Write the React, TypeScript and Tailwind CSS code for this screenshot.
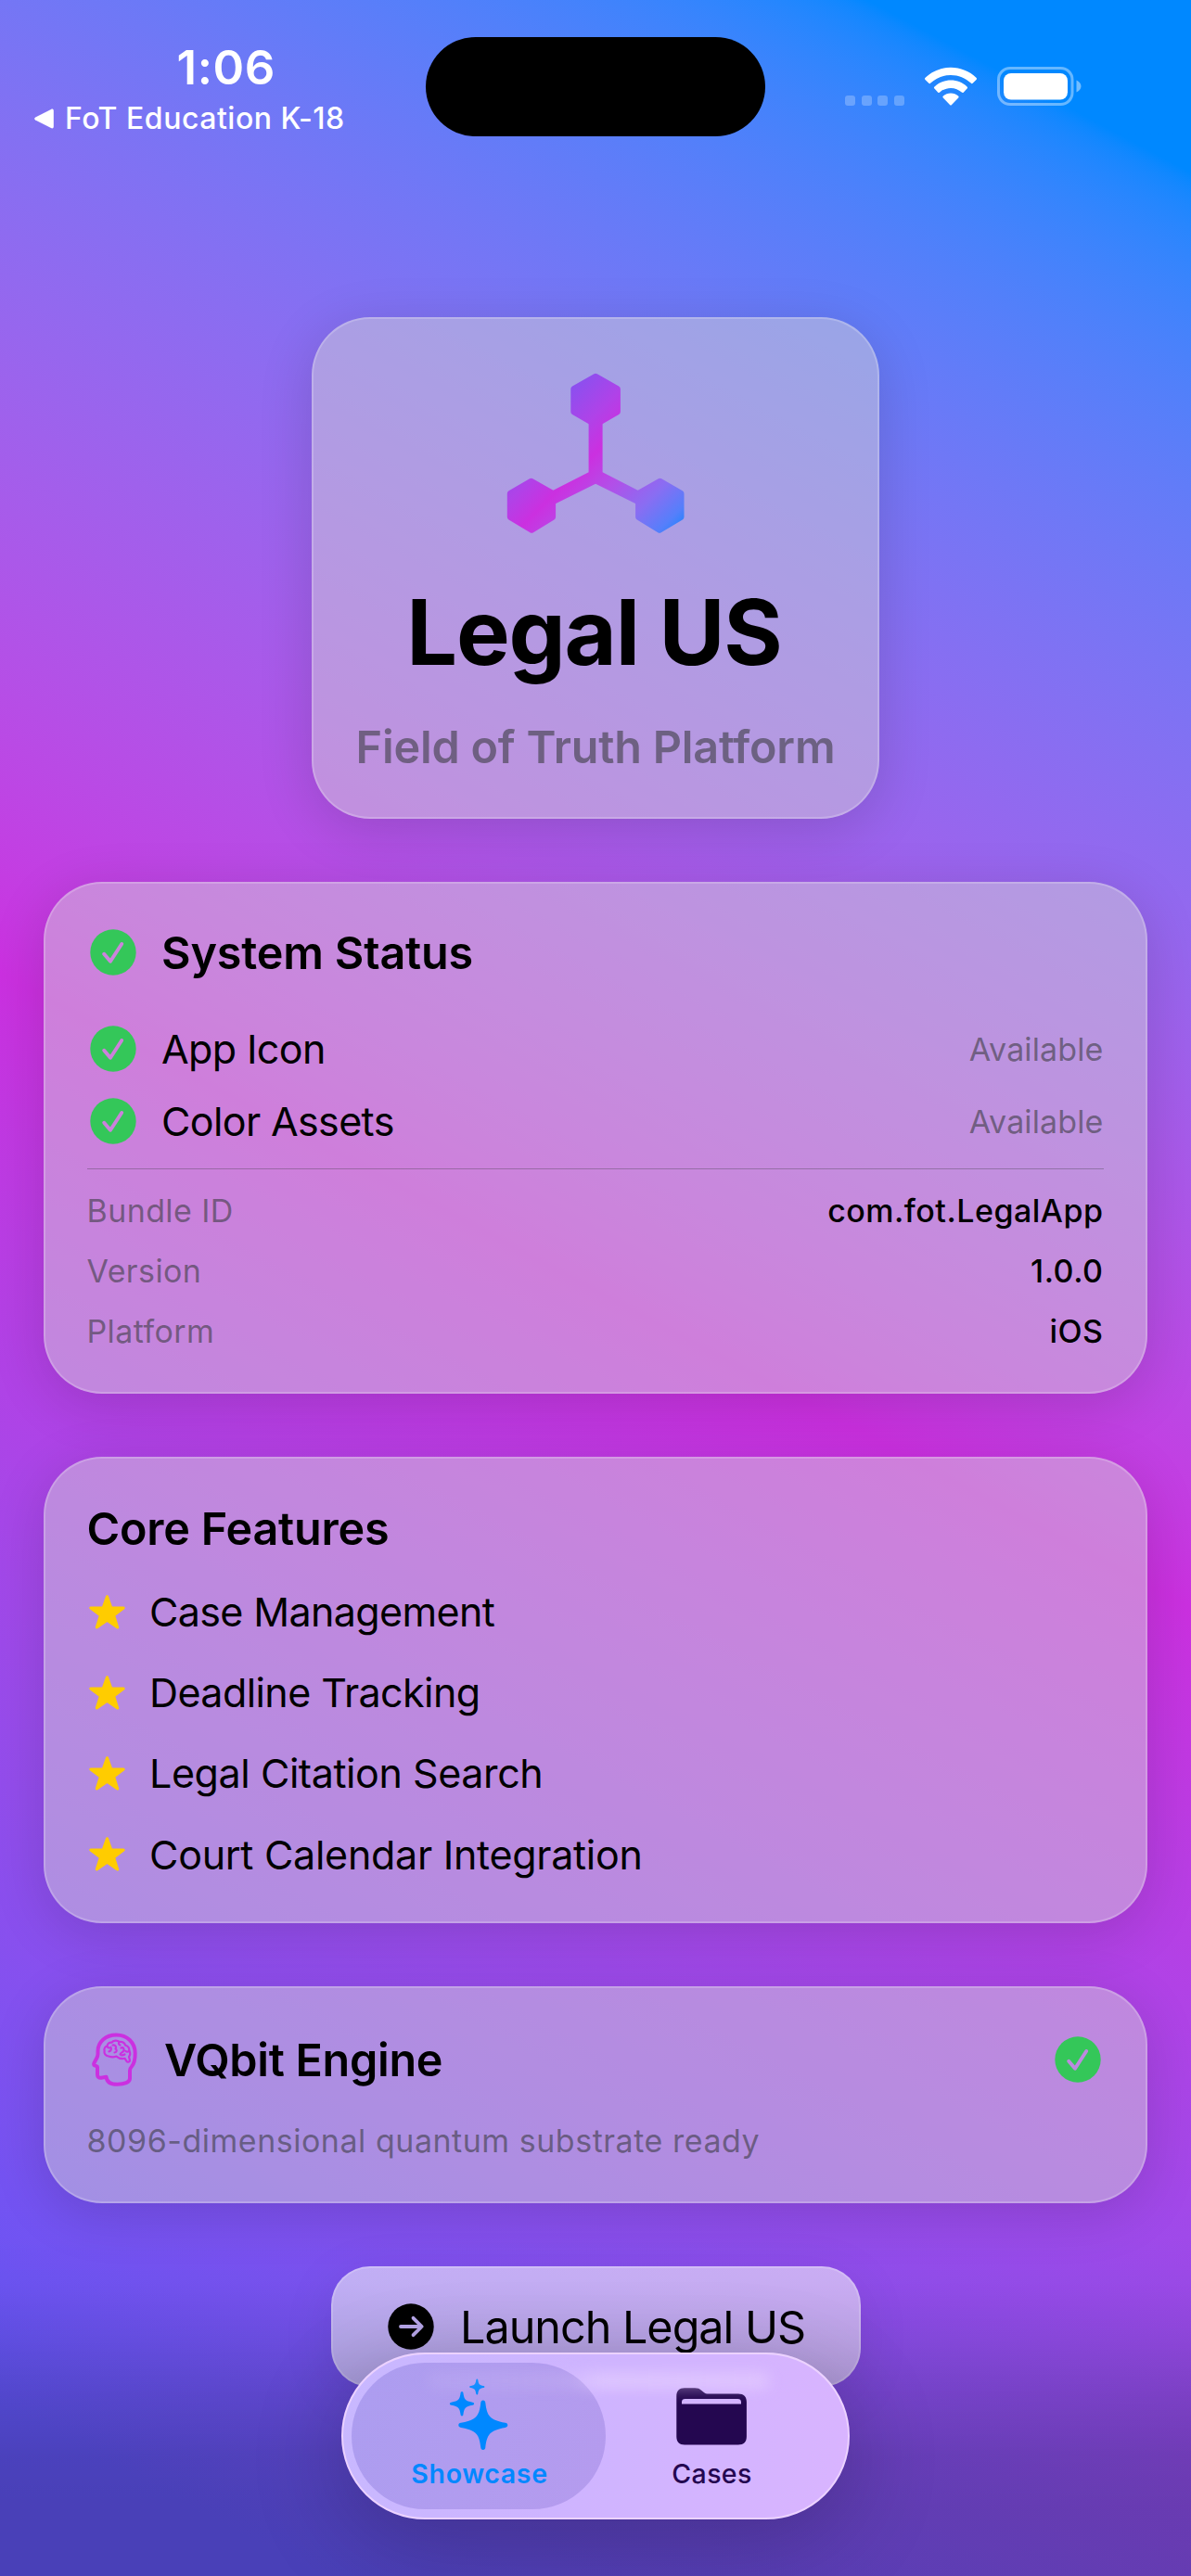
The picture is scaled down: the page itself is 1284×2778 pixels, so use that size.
import type { ReactNode } from "react";

const CARD =
  "border-[2.500px] border-white/20 bg-[rgba(210,208,214,0.49)] bg-clip-border rounded-[63px] shadow-[0_12px_60px_rgba(0,0,0,0.14)]";

function StatusBar() {
  return (
    <header className="flex h-[342px] w-full shrink-0 items-start text-white">
      <div className="flex w-[459px] flex-col pt-[43px]">
        <div className="pl-[190.5px] text-[51px] leading-[60px] font-semibold tracking-[0.58px]">1:06</div>
        <div className="flex items-center pl-[37px] pt-[3px]">
          <svg width="21" height="22" viewBox="0 0 21 22" fill="#fff">
            <path d="M1.2 9.600 18 .9c1.500-.7 2.800-.1 2.800 1.600v17c0 1.700-1.300 2.300-2.800 1.600L1.200 12.400C-.2 11.600-.2 10.400 1.200 9.600Z" />
          </svg>
          <span className="pl-[12px] text-[32px] leading-[44px] font-medium tracking-[0.52px] whitespace-nowrap">
            FoT Education K-18
          </span>
        </div>
      </div>
      <div className="mt-[40px] h-[107px] w-[366px] rounded-full bg-black" />
      <div className="flex items-end pt-[72px] pl-[86px]">
        <div className="flex gap-[6.500px]">
          {[0, 1, 2, 3].map((i) => (
            <span key={i} className="size-[11px] rounded-[3px] bg-white/25" />
          ))}
        </div>
        <svg className="ml-[22px]" width="56" height="42" viewBox="0 0 56 42" fill="#fff">
          <path d="M28 .8C38.600.8 48.300 4.900 55.400 11.700c.8.7.8 1.500.1 2.200l-3.600 3.700c-.7.7-1.500.7-2.200 0C43.900 12.200 36.300 9 28 9S12.100 12.200 6.300 17.600c-.7.7-1.500.7-2.200 0L.5 13.900c-.7-.7-.7-1.500.1-2.200C7.700 4.900 17.400.8 28 .8Z" />
          <path d="M28 14.600c6.800 0 12.900 2.600 17.500 6.900.8.7.8 1.400.1 2.100l-3.700 3.800c-.7.700-1.400.7-2.100.1-3.200-2.900-7.300-4.600-11.800-4.600s-8.600 1.700-11.800 4.600c-.7.600-1.400.6-2.100-.1l-3.700-3.800c-.7-.7-.7-1.400.1-2.100C15.100 17.200 21.200 14.600 28 14.600Z" />
          <path d="M28 28.400c3.100 0 5.900 1.100 8.100 3 .7.600.7 1.300.1 2L29 40.900c-.7.700-1.300.7-2 0l-7.200-7.500c-.6-.7-.6-1.400.1-2 2.200-1.900 5-3 8.100-3Z" />
        </svg>
        <svg className="ml-[22px]" width="91" height="42" viewBox="0 0 91 42">
          <rect x="1.500" y="1.500" width="79.500" height="39" rx="12.500" fill="none" stroke="#fff" strokeOpacity="0.4" strokeWidth="3" />
          <rect x="7" y="7" width="69" height="28.500" rx="8" fill="#fff" />
          <path d="M85.500 14.500c3 1.200 5 3.800 5 6.500s-2 5.300-5 6.500Z" fill="#fff" fillOpacity="0.45" />
        </svg>
      </div>
    </header>
  );
}

function NetworkLogo() {
  return (
    <svg width="192" height="173" viewBox="546 402 192 173">
      <defs>
        <linearGradient id="net" gradientUnits="userSpaceOnUse" x1="551" y1="397" x2="737" y2="583">
          <stop offset="0" stopColor="#6155f5" />
          <stop offset="0.13" stopColor="#7752f2" />
          <stop offset="0.25" stopColor="#904eee" />
          <stop offset="0.38" stopColor="#b042e8" />
          <stop offset="0.49" stopColor="#cb30e0" />
          <stop offset="0.63" stopColor="#b24fe8" />
          <stop offset="0.78" stopColor="#8a6df2" />
          <stop offset="0.9" stopColor="#557ffb" />
          <stop offset="1" stopColor="#0088ff" />
        </linearGradient>
      </defs>
      <g fill="url(#net)" stroke="url(#net)" strokeLinejoin="round">
        <path strokeWidth="7" d="M642.100 406.200 665.400 419.500V444L642.100 457.500 618.800 444V419.500Z" />
        <path strokeWidth="7" d="M572.700 519.200 595.600 532.300V557.500L573.200 571.200 550.300 557.500V532.300Z" />
        <path strokeWidth="7" d="M711.500 519.200 734 532.300V557.500L711 571.200 688.600 557.500V532.300Z" />
        <path stroke="none" d="M634.600 450H649.600V509.300L692 531 688 544.600 642.100 521.700 596.300 544.600 592 531 634.600 509.300Z" />
      </g>
    </svg>
  );
}

function CheckCircle() {
  return (
    <svg className="size-[50px] shrink-0" viewBox="0 0 50 50">
      <mask id="tick">
        <rect width="50" height="50" fill="#fff" />
        <path d="M15.200 26.700 22 34.800 34.200 16" fill="none" stroke="#000" strokeWidth="3.900" strokeLinecap="round" strokeLinejoin="round" />
      </mask>
      <circle cx="25" cy="25" r="24.700" fill="#34c759" mask="url(#tick)" />
    </svg>
  );
}

function Star() {
  return (
    <svg className="h-[37px] w-[39px] shrink-0" viewBox="0 0 39 37">
      <path
        d="M19.500 1.700 23.900 14H37.200L26.600 22 30.700 35 19.500 27.300 8.300 35 12.400 22 1.800 14H15.100Z"
        fill="#ffcc00"
        stroke="#ffcc00"
        strokeWidth="3"
        strokeLinejoin="round"
      />
    </svg>
  );
}

function HeadBrain() {
  return (
    <svg className="h-[62px] w-[54px] shrink-0" viewBox="0 0 54 62" fill="none" stroke="#cb30e0" strokeLinecap="round" strokeLinejoin="round">
      <path
        strokeWidth="4"
        d="M28.400 4.500C40 4.500 48.700 12.500 48.700 24.500 48.700 30.500 48 35 45 38.500 43.600 40 43 41 43 43V51.500C43 55.500 37 57.800 29.600 57.800 22.500 57.800 18 55.500 17.600 49.800L12 50.700C9.500 51 8 49.600 8 47.300V39.200C8 38.500 7.700 38.300 7 38.100L5.600 37.700C4.200 37.200 3.800 36.200 4.400 34.900L7.400 29.200C8.200 27.600 8.500 26.800 8.500 25V22C8.500 12 17 4.500 28.400 4.500Z"
      />
      <g strokeWidth="2.200">
        <path d="M20 27.500C16.500 27 15 24.500 15.600 21.800 14.800 19 16.500 17 18.500 16.500 18.800 13.600 21 12.300 23.500 12.600 25 10.300 29.500 9.900 31.500 12 34.500 11.300 37.500 12.800 38 15.500 41 16.500 42.600 18.800 42.300 21.500 43.800 24 43.300 26.500 42 28L43 32C43 33.700 40.500 34.300 39.500 32.800L37.600 29.800C34 30.600 31 29.800 28.500 27.600 26 28.600 22.500 28.500 20 27.500Z" />
        <path d="M18.500 16.500C19 18.500 21 19 22.500 18M22.500 18C23.500 20 22.500 22 20.500 22.300M24.500 15.500C27.500 15 29 17.500 27.500 19.500 29.500 20.500 29 23.500 26.500 23.500M31.500 12C30.500 13.500 31 15 32.500 15.500M33.500 18.500C36 17.500 37.500 20 36 22 34.500 24 33 23.500 32.500 25.500 34 26.800 36 26.500 37.500 25.500M42.300 21.500C41.500 23 39.500 23 38.500 22" />
      </g>
    </svg>
  );
}

function StatusRow({ label }: { label: string }) {
  return (
    <div className="flex h-[60px] items-center">
      <div className="pl-[3px]">
        <CheckCircle />
      </div>
      <span className="pl-[27.500px] text-[43px] font-normal tracking-[-0.620px]">{label}</span>
      <span className="ml-auto text-[34px] tracking-[0.120px] text-[#3c3c43]/60">Available</span>
    </div>
  );
}

function InfoRow({ label, value }: { label: string; value: ReactNode }) {
  return (
    <div className="flex h-[45px] items-center justify-between text-[34px]">
      <span className="tracking-[0.4px] text-[#3c3c43]/60">{label}</span>
      <span className="font-medium tracking-[0.5px]">{value}</span>
    </div>
  );
}

const FEATURES = [
  { text: "Case Management", cls: "tracking-[-0.63px]" },
  { text: "Deadline Tracking", cls: "tracking-[-0.58px]" },
  { text: "Legal Citation Search", cls: "tracking-[-0.42px]" },
  { text: "Court Calendar Integration", cls: "tracking-[-0.28px]" },
];

function TabBar() {
  return (
    <nav className="absolute top-[2537px] left-[368px] h-[180px] w-[548px] rounded-full shadow-[0_24px_100px_rgba(0,0,0,0.220)]">
      <div className="relative flex size-full overflow-hidden rounded-full border-[2.500px] border-[#ecd2ff] bg-[linear-gradient(100deg,#c8b8ff,#ceb4ff_45%,#d9b4ff)] p-[9px]">
        <div className="relative flex w-[274px] flex-col items-center rounded-full bg-[linear-gradient(110deg,#ac9df0,#b59bee)] pt-[17px]">
          <svg width="64" height="77" viewBox="484 2565 64 77" fill="#0088ff">
            <path d="M520.800 2588.600c1.500 0 2.300.9 2.500 2.400 1.700 14.500 4.500 18.500 21.300 21.800 1.700.3 2.700 1 2.700 2.500s-1 2.300-2.700 2.600c-16.800 3.200-19.600 7.200-21.300 21.700-.2 1.500-1 2.400-2.500 2.400s-2.300-.9-2.500-2.400c-1.700-14.500-4.500-18.500-21.300-21.700-1.700-.3-2.700-1.100-2.700-2.600s1-2.200 2.700-2.500c16.800-3.300 19.600-7.300 21.300-21.800.2-1.500 1-2.400 2.500-2.400Z" />
            <path d="M498 2579.200c.9 0 1.300.5 1.400 1.400 1.100 7.400 2.100 8.600 10.100 10.200 1 .2 1.600.6 1.600 1.500s-.6 1.300-1.600 1.500c-8 1.600-9 2.800-10.100 10.200-.1.900-.5 1.400-1.400 1.400s-1.300-.5-1.400-1.400c-1.100-7.400-2.100-8.600-10.100-10.200-1-.2-1.600-.6-1.600-1.500s.6-1.300 1.600-1.500c8-1.600 9-2.800 10.100-10.200.1-.9.500-1.400 1.400-1.400Z" />
            <path d="M514.300 2565.500c.6 0 .9.300 1 .9.700 4.800 1.400 5.600 6.100 6.600.6.100 1 .4 1 1s-.4.900-1 1c-4.700 1-5.400 1.800-6.100 6.600-.1.600-.4.900-1 .9s-.9-.3-1-.9c-.7-4.800-1.400-5.600-6.100-6.600-.6-.1-1-.4-1-1s.4-.9 1-1c4.700-1 5.400-1.800 6.100-6.600.1-.6.400-.9 1-.9Z" />
          </svg>
          <span className="mt-[8px] ml-[2px] text-[28.500px] leading-[36px] font-semibold tracking-[0.64px] text-[#0088ff]">Showcase</span>
        </div>
        <div className="relative -ml-[23px] flex w-[274px] flex-col items-center pt-[27px]">
          <svg width="76" height="62" viewBox="729 2575.500 76 62" fill="#240750">
            <path
              fillRule="evenodd"
              d="M729.300 2584.500c0-5.600 3-8.700 8.700-8.700h11c3.200 0 5.200.7 7.400 2.600l1.800 1.500c2 1.700 3.400 2.200 6.200 2.200h31.500c5.900 0 9 3 9 8.700V2628c0 6-3.100 9-9 9H738c-5.600 0-8.700-3-8.700-9ZM735 2592.900H799V2591.200c0-2.500-1.300-3.600-3.700-3.600H738.700c-2.400 0-3.700 1.100-3.700 3.600Z"
            />
          </svg>
          <span className="mt-[13px] ml-px text-[28.500px] leading-[36px] font-medium tracking-[0.350px] text-[#240750]">Cases</span>
        </div>
        <div className="pointer-events-none absolute top-[21px] left-[90px] h-[15px] w-[370px] rounded-full bg-[linear-gradient(to_right,rgba(240,220,255,0.120),rgba(240,220,255,0.180)_42%,rgba(240,220,255,0.550)_50%,rgba(240,220,255,0.500))] blur-[8px]" />
      </div>
    </nav>
  );
}

export default function App() {
  return (
    <div className="relative flex h-[2778px] w-[1284px] flex-col overflow-hidden bg-[linear-gradient(208.07deg_in_oklab,#0088ff_164px,#cb30e0_1530px,#6155f5_2893px)] font-['Inter',sans-serif] text-black">
      <StatusBar />

      <main className="flex flex-col items-center gap-[68px] px-[47px]">
        <section className={`${CARD} flex h-[541px] w-[612px] shrink-0 flex-col items-center pt-[57.500px]`}>
          <NetworkLogo />
          <h1 className="mt-[47px] -ml-[3px] text-[97px] leading-[120px] font-bold tracking-[-1.210px] whitespace-nowrap">Legal US</h1>
          <p className="mt-[34.500px] text-[48.500px] leading-[60px] font-semibold tracking-[-0.190px] whitespace-nowrap text-[#3c3c43]/60">
            Field of Truth Platform
          </p>
        </section>

        <section className={`${CARD} flex h-[552px] w-full shrink-0 flex-col pt-[44px] pr-[45.500px] pl-[44.500px]`}>
          <div className="flex h-[60px] items-center">
            <div className="pl-[3px]">
              <CheckCircle />
            </div>
            <h2 className="pt-[2px] pl-[27.500px] text-[48.500px] font-semibold tracking-[-0.160px]">System Status</h2>
          </div>
          <div className="mt-[44px] flex flex-col gap-[18px]">
            <StatusRow label="App Icon" />
            <StatusRow label="Color Assets" />
          </div>
          <div className="mt-[20.500px] h-px bg-[#3c3c43]/35" />
          <div className="mt-[22px] flex flex-col gap-[20px]">
            <InfoRow label="Bundle ID" value="com.fot.LegalApp" />
            <InfoRow label="Version" value="1.0.0" />
            <InfoRow label="Platform" value="iOS" />
          </div>
        </section>

        <section className={`${CARD} flex h-[503px] w-full shrink-0 flex-col pt-[46px] pl-[44.500px]`}>
          <h2 className="text-[48.500px] leading-[60px] font-semibold tracking-[-0.210px]">Core Features</h2>
          <ul className="mt-[29px] flex flex-col gap-[27.300px]">
            {FEATURES.map((f) => (
              <li key={f.text} className="flex h-[60px] items-center pl-[2px]">
                <Star />
                <span className={`pl-[26.500px] text-[43px] ${f.cls}`}>{f.text}</span>
              </li>
            ))}
          </ul>
        </section>

        <section className={`${CARD} flex h-[234px] w-full shrink-0 flex-col pt-[47px] pr-[48px] pl-[44.500px]`}>
          <div className="flex h-[60px] items-center">
            <div className="pl-[3px]">
              <HeadBrain />
            </div>
            <h2 className="pt-[2px] pl-[26.500px] text-[48.500px] font-semibold tracking-[-0.290px]">VQbit Engine</h2>
            <div className="ml-auto">
              <CheckCircle />
            </div>
          </div>
          <p className="mt-[35px] text-[34px] leading-[45px] tracking-[0.520px] text-[#3c3c43]/60">
            8096-dimensional quantum substrate ready
          </p>
        </section>

        <button className="flex h-[130px] w-[571px] shrink-0 items-center rounded-[42px] border-[2.500px] border-white/20 bg-white/55 bg-clip-border pl-[59.500px] shadow-[0_12px_60px_rgba(0,0,0,0.080)]">
          <svg className="size-[50px]" viewBox="0 0 50 50">
            <mask id="arrow">
              <rect width="50" height="50" fill="#fff" />
              <path d="M14 25H36.500M27.500 15.800 36.700 25 27.500 34.200" fill="none" stroke="#000" strokeWidth="3.800" strokeLinecap="round" strokeLinejoin="round" />
            </mask>
            <circle cx="25" cy="25" r="24.700" mask="url(#arrow)" />
          </svg>
          <span className="pt-[2px] pl-[28px] text-[48.500px] tracking-[-1.010px] whitespace-nowrap">Launch Legal US</span>
        </button>
      </main>

      <div className="pointer-events-none absolute inset-x-0 bottom-0 h-[370px] bg-[linear-gradient(to_bottom,rgba(0,0,0,0),rgba(0,0,0,0.020)_15%,rgba(0,0,0,0.080)_30%,rgba(0,0,0,0.170)_48%,rgba(0,0,0,0.230)_65%,rgba(0,0,0,0.250)_80%,rgba(0,0,0,0.250))]" />
      <TabBar />
    </div>
  );
}
